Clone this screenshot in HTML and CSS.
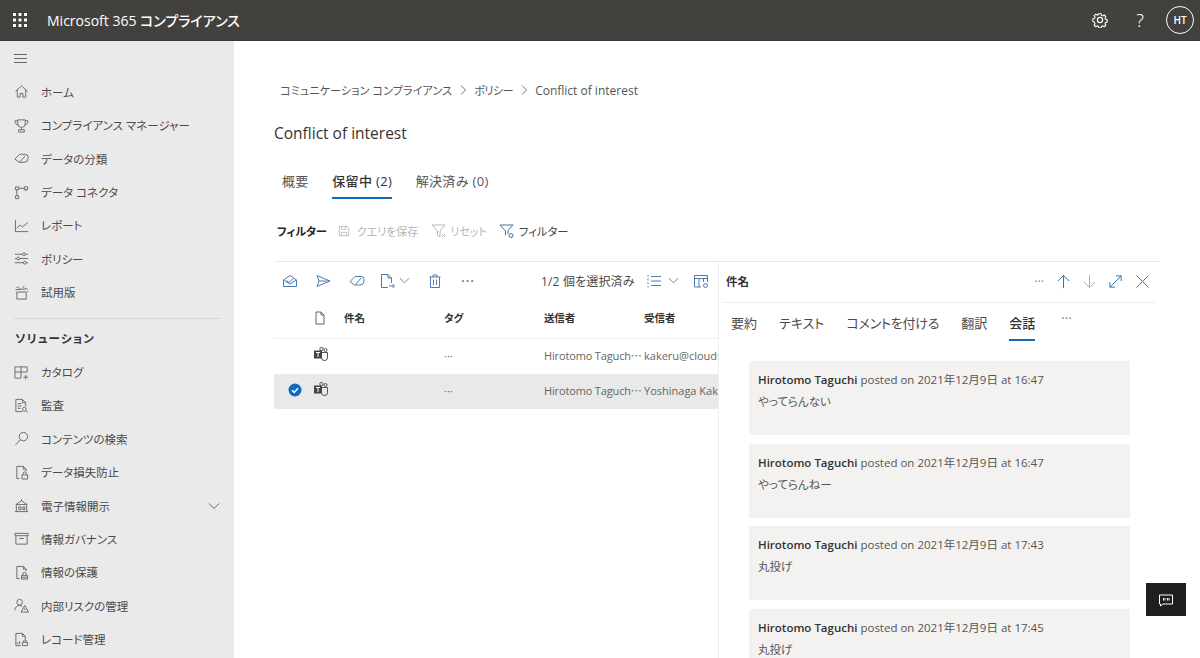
FILE: index.html
```html
<!DOCTYPE html>
<html lang="ja">
<head>
<meta charset="utf-8">
<title>Microsoft 365 コンプライアンス</title>
<link rel="stylesheet" href="styles.css">
</head>
<body>
<header class="topbar">
  <svg class="waffle" width="16" height="16" viewBox="0 0 16 16"><g fill="#fff"><rect x="1" y="1" width="3" height="3"/><rect x="6.5" y="1" width="3" height="3"/><rect x="12" y="1" width="3" height="3"/><rect x="1" y="6.5" width="3" height="3"/><rect x="6.5" y="6.5" width="3" height="3"/><rect x="12" y="6.5" width="3" height="3"/><rect x="1" y="12" width="3" height="3"/><rect x="6.5" y="12" width="3" height="3"/><rect x="12" y="12" width="3" height="3"/></g></svg>
  <div class="app-name">Microsoft 365 コンプライアンス</div>
  <div class="top-actions">
    <svg class="gear" width="16" height="16" viewBox="0 0 16 16" fill="none" stroke="#fff" stroke-width="1.2"><circle cx="8" cy="8" r="2.6"/><path d="M6.7 1h2.6l.4 1.9 1.3.6 1.7-1 1.8 1.8-1 1.7.6 1.3 1.9.4v2.6l-1.9.4-.6 1.3 1 1.7-1.8 1.8-1.7-1-1.3.6-.4 1.9H6.7l-.4-1.9-1.3-.6-1.7 1-1.8-1.8 1-1.7-.6-1.3L0 9.3V6.7l1.9-.4.6-1.3-1-1.7 1.800-1.800 1.700 1 1.300-.6z" transform="translate(.8 .8) scale(.9)"/></svg>
    <div class="help">?</div>
    <div class="avatar">HT</div>
  </div>
</header>
<div class="shell">
  <nav class="sidebar">
    <div class="hamburger"><svg width="16" height="16" viewBox="0 0 16 16" stroke="#666" fill="none"><path d="M1 3.500h13M1 7.500h13M1 11.500h13"/></svg></div>
    <a class="nav-item"><svg class="ni" viewBox="0 0 16 16"><path d="M1.500 8 8 2l6.500 6M3.500 6.500V14h3V10h3v4h3V6.500"/></svg>ホーム</a>
    <a class="nav-item"><svg class="ni" viewBox="0 0 16 16"><path d="M4 2h8v4a4 4 0 0 1-8 0zM4 3H1c0 3 1.500 4 3.500 4.500M12 3h3c0 3-1.500 4-3.500 4.500M8 10v2M5 12.500h6V15H5z"/></svg>コンプライアンス マネージャー</a>
    <a class="nav-item"><svg class="ni" viewBox="0 0 16 16"><path d="M1 8.500 6 3.500h6a3 3 0 0 1 3 3v1.500a4 4 0 0 1-4 4H5.500zM6 12l6-7"/></svg>データの分類</a>
    <a class="nav-item"><svg class="ni" viewBox="0 0 16 16"><path d="M1.500 2h3.500v3H1.500zM11 2h3.500v3H11zM1.500 11.500h3.500V14.500H1.500zM3 5v6.500M5 3.500h6M12.500 5v1.500"/></svg>データ コネクタ</a>
    <a class="nav-item"><svg class="ni" viewBox="0 0 16 16"><path d="M1.500 2v12.500H15M3 11l3.500-3.500 2.500 2L14.500 5"/></svg>レポート</a>
    <a class="nav-item"><svg class="ni" viewBox="0 0 16 16"><path d="M1 3.500h8M12 3.500h3M1 8h2M6 8h9M1 12.500h9M13 12.500h2"/><circle cx="10.500" cy="3.500" r="1.500"/><circle cx="4.500" cy="8" r="1.500"/><circle cx="11.500" cy="12.500" r="1.500"/></svg>ポリシー</a>
    <a class="nav-item"><svg class="ni" viewBox="0 0 16 16"><path d="M3 7.500h10V15H3zM1.500 5l13-1M6 4 4 1.500M9 3.500 11 1M2 2l1 1M14 6.500l1 .500"/></svg>試用版</a>
    <hr class="nav-rule">
    <div class="nav-heading">ソリューション</div>
    <a class="nav-item"><svg class="ni" viewBox="0 0 16 16"><path d="M1 2h13v5.500H1zM1 7.500V14h6.500V2M10 13h5M12.500 10.500v5"/></svg>カタログ</a>
    <a class="nav-item"><svg class="ni" viewBox="0 0 16 16"><path d="M2 1.500h7l3.500 3.500v4M9 1.500V5h3.500M2 1.500V14.500h7M4 6h4M4 8.500h4M4 11h3"/><circle cx="11" cy="12" r="2"/><path d="m12.500 13.500 2 2"/></svg>監査</a>
    <a class="nav-item"><svg class="ni" viewBox="0 0 16 16"><circle cx="10" cy="6" r="4.500"/><path d="M6.800 9.200 1.500 15"/></svg>コンテンツの検索</a>
    <a class="nav-item"><svg class="ni" viewBox="0 0 16 16"><path d="M6 14.500H3V1.500h7l3 3v2M10 1.500v3h3M8.500 10.500h6V15h-6zM9.800 10.500V9a1.700 1.700 0 0 1 3.400 0v1.500"/></svg>データ損失防止</a>
    <a class="nav-item"><svg class="ni" viewBox="0 0 16 16"><path d="M1 14.500h14M2.500 14.500V7h11v7.500M2 7l6-4 6 4M8 1v2M5 9.500v3h2.500v-3zM9.500 9.500h2v3h-2z"/></svg>電子情報開示<svg class="nav-chevron" width="12" height="12" viewBox="0 0 12 12" fill="none" stroke="#666"><path d="m1 3.500 5 5 5-5"/></svg></a>
    <a class="nav-item"><svg class="ni" viewBox="0 0 16 16"><path d="M1 2.500h14V5H1zM2 5v9h12V5M5.500 8h5"/></svg>情報ガバナンス</a>
    <a class="nav-item"><svg class="ni" viewBox="0 0 16 16"><path d="M6 14.500H3V1.500h7l3 3v2M10 1.500v3h3M8 11h6.500v4H8zM9.500 11V9.500a1.700 1.700 0 0 1 3.400 0V11M8 13h6.500"/></svg>情報の保護</a>
    <a class="nav-item"><svg class="ni" viewBox="0 0 16 16"><circle cx="6" cy="4.500" r="3"/><path d="M1 13c0-3 2-5 5-5 1 0 2 .3 2.800 1M11.500 8 15.500 15h-8zM11.500 11v2"/></svg>内部リスクの管理</a>
    <a class="nav-item"><svg class="ni" viewBox="0 0 16 16"><path d="M7 14.500H2V1.500h7l3 3v3M9 1.500v3h3M4 13v-2M6 13v-3M9 14.500h5.500V11H9zM10.300 11V9.800a1.400 1.400 0 0 1 2.800 0V11"/></svg>レコード管理</a>
  </nav>
  <main class="content">
    <div class="crumbs"><span class="crumb-jp">コミュニケーション コンプライアンス</span><svg class="crumb-sep" width="12" height="12" viewBox="0 0 12 12"><path d="m4 1.500 4.500 4.500L4 10.500"/></svg><span class="crumb-jp crumb-short">ポリシー</span><svg class="crumb-sep" width="12" height="12" viewBox="0 0 12 12"><path d="m4 1.500 4.500 4.500L4 10.500"/></svg><span>Conflict of interest</span></div>
    <h1 class="page-title">Conflict of interest</h1>
    <div class="page-tabs">
      <div class="page-tab">概要</div>
      <div class="page-tab is-active">保留中 (2)</div>
      <div class="page-tab">解決済み (0)</div>
    </div>
    <div class="filters">
      <strong class="filter-title">フィルター</strong>
      <span class="filter-btn is-disabled fb-save"><svg width="12" height="12" viewBox="0 0 14 14" class="fi"><path d="M1.500 1.500h9l2 2v9h-11zM4 1.500V5h5V1.500M4 12.500V8.500h6v4"/></svg>クエリを保存</span>
      <span class="filter-btn is-disabled fb-reset"><svg width="16" height="16" viewBox="0 0 16 16" class="fi"><path d="M1 2h13L9 8v6L6.500 12V8zM11 11l3 3M14 11l-3 3"/></svg>リセット</span>
      <span class="filter-btn is-on"><svg width="16" height="16" viewBox="0 0 16 16" class="fi"><path d="M1 2h13L9 7.500V11M6.500 12.500V8L1 2"/><circle cx="12" cy="12.500" r="2"/></svg>フィルター</span>
    </div>
    <section class="split">
      <div class="list">
        <div class="list-tools">
          <svg class="ti t1" viewBox="0 0 16 16"><path d="M1.500 7 8 2.500 14.500 7v6.500h-13zM1.500 7 8 11l6.500-4M4.500 7.500 7 9.500l4.500-4"/></svg>
          <svg class="ti t2" viewBox="0 0 16 16"><path d="M2 2.500 15 8 2 13.500 4 8zM4 8h11"/></svg>
          <svg class="ti t3" viewBox="0 0 16 16"><path d="M1 8.500 6 3.500h6a3 3 0 0 1 3 3v1.500a4 4 0 0 1-4 4H5.500zM6 12l6-7"/></svg>
          <svg class="ti t4" viewBox="0 0 16 16"><path d="M9 14.500H2.500v-13H9l3.500 3.500v5M9 1.500V5h3.500M10 13h5M13.500 11l2 2-2 2"/></svg>
          <svg class="chev" viewBox="0 0 12 12"><path d="m1 3.500 5 5 5-5"/></svg>
          <svg class="ti t5" viewBox="0 0 16 16"><path d="M2.500 4h11M6 4V2h4v2M3.500 4v10.500h9V4M6.500 6.500v5.500M9.500 6.500v5.500"/></svg>
          <span class="dots">···</span>
          <span class="sel-count">1/2 個を選択済み</span>
          <svg class="ti t6" viewBox="0 0 16 16"><path d="M5 3.500h10M5 8h10M5 12.500h10M2 2v1.500M2 5.500v2M2 9.500v1.500M2 13v1.500"/></svg>
          <svg class="chev c2" viewBox="0 0 12 12"><path d="m1 3.500 5 5 5-5"/></svg>
          <svg class="ti t7" viewBox="0 0 16 16"><path d="M8 14H1.500V2.500h13V9M1.500 5.500h13M6 5.500V14M10.500 5.500V9"/><circle cx="12.500" cy="12.500" r="2"/></svg>
        </div>
        <div class="row row-head">
          <span class="c-check"></span>
          <span class="c-icon"><svg width="14" height="14" viewBox="0 0 14 14" fill="none" stroke="#666"><path d="M3 1h5l3 3v9H3zM8 1v3h3"/></svg></span>
          <span class="c-subject">件名</span><span class="c-tag">タグ</span><span class="c-from">送信者</span><span class="c-to">受信者</span>
        </div>
        <div class="row">
          <span class="c-check"></span>
          <span class="c-icon c-teams"><svg width="16" height="16" viewBox="0 0 16 16"><circle cx="12.500" cy="4" r="1.500" fill="none" stroke="#555"/><circle cx="8.500" cy="3" r="1.700" fill="none" stroke="#555"/><path d="M8 6.500h6.500V11a3 3 0 0 1-6 1" fill="none" stroke="#555"/><rect x="1" y="4.500" width="8" height="8" fill="#444"/><path d="M3 6.500h4M5 6.500v4.500" stroke="#fff"/></svg></span>
          <span class="c-subject"></span><span class="c-tag">···</span><span class="c-from">Hirotomo Taguch⋯</span><span class="c-to">kakeru@cloudnative.co.jp</span>
        </div>
        <div class="row is-selected">
          <span class="c-check"><svg width="14" height="14" viewBox="0 0 14 14"><circle cx="7" cy="7" r="6.500" fill="#0f6cbd"/><path d="m4 7.200 2.200 2.200L10 5.200" fill="none" stroke="#fff" stroke-width="1.500"/></svg></span>
          <span class="c-icon c-teams"><svg width="16" height="16" viewBox="0 0 16 16"><circle cx="12.500" cy="4" r="1.500" fill="none" stroke="#555"/><circle cx="8.500" cy="3" r="1.700" fill="none" stroke="#555"/><path d="M8 6.500h6.500V11a3 3 0 0 1-6 1" fill="none" stroke="#555"/><rect x="1" y="4.500" width="8" height="8" fill="#444"/><path d="M3 6.500h4M5 6.500v4.500" stroke="#fff"/></svg></span>
          <span class="c-subject"></span><span class="c-tag">···</span><span class="c-from">Hirotomo Taguch⋯</span><span class="c-to">Yoshinaga Kakeru</span>
        </div>
      </div>
      <aside class="panel">
        <div class="panel-head">
          <strong class="panel-title">件名</strong>
          <span class="panel-dots">···</span>
          <svg class="pi" viewBox="0 0 16 16"><path d="M8 15V1.500M2 7.500l6-6 6 6"/></svg>
          <svg class="pi is-off" viewBox="0 0 16 16"><path d="M8 1v13.500M2 8.500l6 6 6-6"/></svg>
          <svg class="pi pi-expand" viewBox="0 0 16 16"><path d="M2 14 14 2M8.500 2H14v5.500M2 8.500V14h5.500"/></svg>
          <svg class="pi" viewBox="0 0 16 16"><path d="m1.500 1.500 13 13M14.500 1.500l-13 13"/></svg>
        </div>
        <div class="panel-tabs">
          <div class="panel-tab">要約</div>
          <div class="panel-tab">テキスト</div>
          <div class="panel-tab tab-tight">コメントを付ける</div>
          <div class="panel-tab">翻訳</div>
          <div class="panel-tab is-active">会話</div>
          <div class="panel-more">···</div>
        </div>
        <div class="thread">
          <article class="msg"><p class="msg-meta"><b>Hirotomo Taguchi</b> posted on 2021年12月9日 at 16:47</p><p class="msg-text">やってらんない</p></article>
          <article class="msg"><p class="msg-meta"><b>Hirotomo Taguchi</b> posted on 2021年12月9日 at 16:47</p><p class="msg-text">やってらんねー</p></article>
          <article class="msg"><p class="msg-meta"><b>Hirotomo Taguchi</b> posted on 2021年12月9日 at 17:43</p><p class="msg-text">丸投げ</p></article>
          <article class="msg"><p class="msg-meta"><b>Hirotomo Taguchi</b> posted on 2021年12月9日 at 17:45</p><p class="msg-text">丸投げ</p></article>
        </div>
      </aside>
    </section>
  </main>
</div>
<div class="feedback"><svg width="16" height="16" viewBox="0 0 16 16" fill="none" stroke="#fff"><path d="M1.500 3h13v9H5l-2.500 2v-2h-1z"/><path d="M5.500 6v2.500M7 6v2.500M9.500 6v2.500M11 6v2.500" stroke-width="1"/></svg></div>
</body>
</html>
```
FILE: styles.css
```css
* { box-sizing: border-box; }
html, body { margin: 0; height: 658px; overflow: hidden; }
body {
  font-family: "Open Sans", "Noto Sans CJK JP", sans-serif;
  font-size: 12px;
  font-feature-settings: "palt";
  color: #4a4a4a;
  background: #fff;
}
.topbar {
  height: 41px;
  background: #43413e;
  color: #fff;
  display: flex;
  align-items: center;
  padding-left: 12px;
  border-bottom: 1px solid #3a3937;
}
.waffle { flex: none; }
.app-name { margin-left: 19px; font-size: 14px; font-weight: 500; }
.top-actions { margin-left: auto; display: flex; align-items: center; padding-right: 6px; }
.gear { margin-right: 24px; }
.help { font-size: 18px; font-weight: 300; width: 16px; text-align: center; margin-right: 18px; font-family: "Noto Sans", sans-serif; }
.avatar {
  width: 28px; height: 28px; border-radius: 50%;
  border: 1.500px solid #fff;
  display: flex; align-items: center; justify-content: center;
  font-size: 10px; font-weight: 600;
}
.shell { display: flex; height: 617px; }
.sidebar { width: 234px; flex: none; background: #eaeaea; padding-top: 1px; overflow: hidden; }
.hamburger { height: 33.200px; padding: 9px 0 0 13px; }
.nav-item {
  height: 33.400px;
  padding-left: 14px;
  display: flex; align-items: center;
  color: #4a4a4a;
  font-size: 11.500px;
}
.ni {
  width: 15px; height: 15px; margin-right: 12px; flex: none;
  fill: none; stroke: #666; stroke-width: 1;
}
.nav-chevron { margin-left: auto; margin-right: 14px; }
.nav-rule { border: 0; border-top: 1px solid #d6d6d6; margin: 9px 14px 3px; }
.nav-heading { height: 33.400px; line-height: 33.400px; padding-left: 15px; font-weight: 600; font-size: 11.500px; letter-spacing: 1.200px; color: #333; }
.content { flex: 1; min-width: 0; padding: 39px 40px 0; overflow: hidden; }
.crumbs { height: 20px; padding-left: 6px; display: flex; align-items: center; color: #555; font-size: 12px; }
.crumb-jp { font-size: 11.200px; }
.crumb-short { letter-spacing: -.6px; }
.crumb-sep { margin: 0 5px; fill: none; stroke: #777; }
.page-title { margin: 21px 0 0; height: 24px; line-height: 24px; font-size: 15.500px; font-weight: 500; color: #333; }
.page-tabs { margin-top: 20px; height: 34px; display: flex; gap: 23.500px; padding-left: 8px; font-size: 13px; }
.page-tab { line-height: 32px; height: 34px; color: #555; letter-spacing: .35px; }
.page-tab.is-active { font-weight: 500; color: #333; border-bottom: 2px solid #0f6cbd; }
.filters { margin-top: 20px; height: 24px; display: flex; align-items: center; padding-left: 3px; font-size: 11px; }
.filter-title { font-weight: 700; color: #222; margin-right: 11px; }
.filter-btn { display: flex; align-items: center; gap: 4px; margin-right: 12px; }
.fb-save { gap: 7px; margin-right: 13px; }
.fb-reset { gap: 3px; }
.filter-btn.is-on { font-size: 11.300px; }
.fi { fill: none; stroke: currentColor; flex: none; }
.filter-btn.is-disabled { color: #b5b5b5; }
.filter-btn.is-on { color: #444; }
.filter-btn.is-on .fi { stroke: #3f6fa5; }
.split { margin-top: 18px; border-top: 1px solid #e8e8e8; display: flex; height: 420px; }
.list { width: 444px; flex: none; overflow: hidden; }
.list-tools { height: 37px; display: flex; align-items: center; padding-left: 8px; }
.ti { width: 16px; height: 16px; flex: none; fill: none; stroke: #4f7cb0; }
.t2 { margin-left: 17px; }
.t3 { margin-left: 18px; }
.t4 { margin-left: 14px; }
.chev { width: 11px; height: 11px; margin-left: 4px; flex: none; fill: none; stroke: #777; }
.t5 { margin-left: 17px; }
.dots { margin-left: 18px; letter-spacing: 1px; font-size: 14px; color: #555; }
.sel-count { margin-left: 66px; color: #4a4a4a; letter-spacing: .15px; }
.t6 { margin-left: 11px; }
.c2 { margin-left: 6px; }
.t7 { margin-left: 14px; }
.row { height: 35px; padding-bottom: 3px; display: flex; align-items: center; white-space: nowrap; color: #666; font-size: 11px; }
.row-head { height: 40px; padding-bottom: 2px; border-bottom: 1px solid #eee; color: #333; font-weight: 600; font-size: 10.500px; }
.row.is-selected { background: #e9e9e9; }
.c-check { width: 39px; flex: none; padding-left: 14px; display: flex; }
.c-icon { width: 31px; flex: none; display: flex; }
.c-teams { margin-bottom: 2px; }
.c-subject { width: 100px; flex: none; }
.c-tag { width: 100px; flex: none; }
.c-from { width: 100px; flex: none; letter-spacing: -.15px; }
.c-to { width: 74px; flex: none; overflow: hidden; }
.panel { flex: 1; min-width: 0; border-left: 1px solid #efefef; overflow: hidden; }
.panel-head { height: 41px; margin: 0 4px 0 3px; border-bottom: 1px solid #ededed; display: flex; align-items: center; padding: 0 6px 2px 4px; }
.panel-title { font-weight: 600; font-size: 11.500px; color: #333; margin-right: auto; }
.panel-dots { color: #888; }
.pi { width: 15px; height: 15px; margin-left: 12px; fill: none; stroke: #2f6aa8; flex: none; }
.pi.is-off { stroke: #aaa; margin-left: 11px; }
.pi-expand { margin-left: 11px; }
.panel-tabs { height: 38px; display: flex; gap: 22px; padding-left: 12px; font-size: 13px; }
.panel-tab { height: 38px; line-height: 40px; color: #4a4a4a; }
.tab-tight { letter-spacing: -.2px; }
.panel-tab.is-active { border-bottom: 2px solid #0f6cbd; color: #333; font-weight: 500; }
.panel-more { margin-left: 4px; line-height: 30px; color: #777; }
.thread { padding: 20px 0 0 30px; display: flex; flex-direction: column; gap: 8.700px; }
.msg { width: 381px; height: 74px; flex: none; background: #f3f2f1; padding: 10px 9px; }
.msg p { margin: 0; line-height: 18px; }
.msg-meta { color: #555; font-size: 11.500px; }
.msg-meta b { font-weight: 600; color: #333; }
.msg-text { margin-top: 4px !important; color: #555; font-size: 11.500px; }
.feedback {
  position: fixed; left: 1146px; top: 583px;
  width: 40px; height: 33px; background: #1f1f1f;
  display: flex; align-items: center; justify-content: center;
}
```
